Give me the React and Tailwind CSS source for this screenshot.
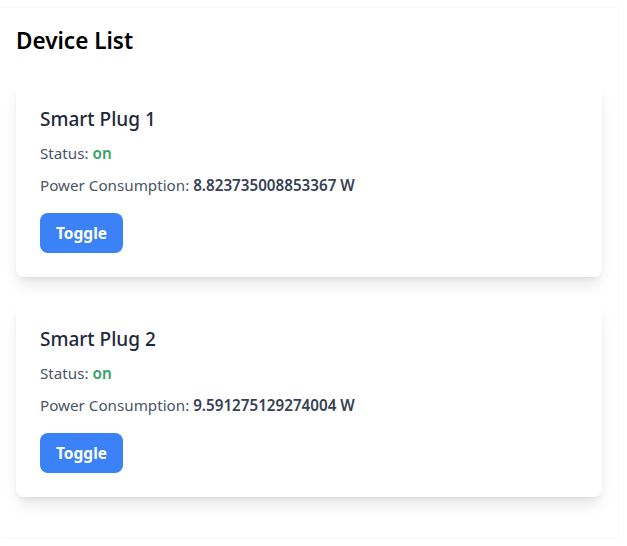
import React, { useState } from 'react';

const initialDevices = [
  { id: 1, name: 'Smart Plug 1', status: 'on', power: 8.823735008853367 },
  { id: 2, name: 'Smart Plug 2', status: 'on', power: 9.591275129274004 },
];

const DeviceCard = ({ device, onToggle }) => {
  return (
    <div className="bg-white rounded-lg shadow-lg p-6 mb-6">
      <h3 className="text-[19px] leading-7 font-medium text-gray-800 mb-2">{device.name}</h3>
      <p className="text-[15.2px] leading-6 text-gray-600 mb-2">
        Status:{' '}
        <span className={device.status === 'on' ? 'text-[#38a169] font-semibold' : 'text-red-600 font-semibold'}>
          {device.status}
        </span>
      </p>
      <p className="text-[15.2px] leading-6 text-gray-600 mb-4">
        Power Consumption: <span className="font-semibold text-gray-700">{device.power} W</span>
      </p>
      <button
        onClick={() => onToggle(device.id)}
        className="bg-[#3b82f6] hover:bg-blue-600 text-white text-[15.5px] leading-6 font-bold px-4 py-2 rounded-lg"
      >
        Toggle
      </button>
    </div>
  );
};

const App = () => {
  const [devices, setDevices] = useState(initialDevices);

  const handleToggle = (id) => {
    setDevices(devices.map((d) => (d.id === id ? { ...d, status: d.status === 'on' ? 'off' : 'on' } : d)));
  };

  return (
    <div className="min-h-screen bg-white font-['Noto_Sans',sans-serif]">
      <div className="mt-2 w-[618px] px-4 pt-[17px] pb-4 shadow-[0_0_3px_rgba(0,0,0,0.06)]">
        <h2 className="text-[22.5px] leading-8 font-semibold text-black mb-6">Device List</h2>
        {devices.map((device) => (
          <DeviceCard key={device.id} device={device} onToggle={handleToggle} />
        ))}
      </div>
    </div>
  );
};

export default App;
